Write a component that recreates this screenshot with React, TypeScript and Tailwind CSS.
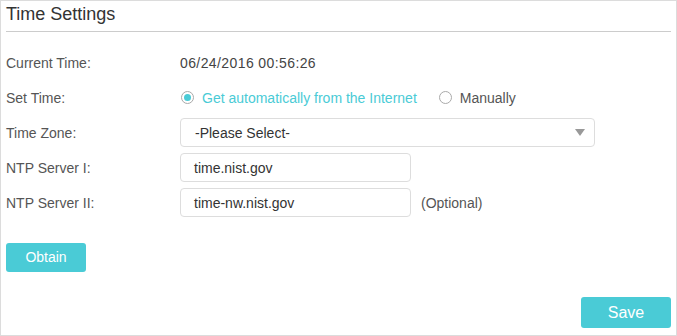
export default function App() {
  const font = { fontFamily: '"Liberation Sans", Arial, sans-serif' };
  return (
    <div
      className="w-[677px] h-[336px] border border-[#dcdcdc] bg-white px-[5px] flex flex-col"
      style={font}
    >
      <div className="h-[31px] border-b border-[#cccccc] pt-[3px] shrink-0">
        <div className="text-[18px] leading-[20px] text-[#333333]">Time Settings</div>
      </div>
      <div className="mt-[13px] flex flex-col text-[14px] leading-[16px]">
        <div className="h-[35px] flex items-center">
          <div className="w-[174px] text-[#555555]">Current Time:</div>
          <div className="text-[#444444] tracking-[0.4px]">06/24/2016 00:56:26</div>
        </div>
        <div className="h-[35px] flex items-center">
          <div className="w-[174px] text-[#555555]">Set Time:</div>
          <div className="flex items-center">
            <span className="ml-[1px] w-[13px] h-[13px] rounded-full border border-[#aaaaaa] flex items-center justify-center">
              <span className="w-[7px] h-[7px] rounded-full bg-[#4acbd6]" />
            </span>
            <span className="ml-[8px] text-[#4acbd6]">Get automatically from the Internet</span>
            <span className="ml-[22px] w-[13px] h-[13px] rounded-full border border-[#aaaaaa]" />
            <span className="ml-[8px] text-[#555555]">Manually</span>
          </div>
        </div>
        <div className="h-[35px] flex items-center">
          <div className="w-[174px] text-[#555555]">Time Zone:</div>
          <div className="w-[415px] h-[29px] border border-[#dddddd] rounded-[4px] flex items-center justify-between pl-[14px] pr-[9px]">
            <span className="text-[#333333]">-Please Select-</span>
            <svg width="10" height="7" viewBox="0 0 10 7">
              <polygon points="0,0 10,0 5,7" fill="#999999" />
            </svg>
          </div>
        </div>
        <div className="h-[35px] flex items-center">
          <div className="w-[174px] text-[#555555]">NTP Server I:</div>
          <div className="w-[231px] h-[29px] border border-[#dddddd] rounded-[4px] flex items-center pl-[13px]">
            <span className="text-[#333333]">time.nist.gov</span>
          </div>
        </div>
        <div className="h-[35px] flex items-center">
          <div className="w-[174px] text-[#555555]">NTP Server II:</div>
          <div className="w-[231px] h-[29px] border border-[#dddddd] rounded-[4px] flex items-center pl-[13px]">
            <span className="text-[#333333]">time-nw.nist.gov</span>
          </div>
          <span className="ml-[10px] text-[#555555]">(Optional)</span>
        </div>
      </div>
      <div className="mt-[23px]">
        <button className="w-[80px] h-[29px] rounded-[3px] bg-[#4acbd6] text-white text-[14px]">
          Obtain
        </button>
      </div>
      <div className="mt-[25px] flex justify-end">
        <button className="w-[90px] h-[31px] rounded-[3px] bg-[#4acbd6] text-white text-[16px]">
          Save
        </button>
      </div>
    </div>
  );
}
